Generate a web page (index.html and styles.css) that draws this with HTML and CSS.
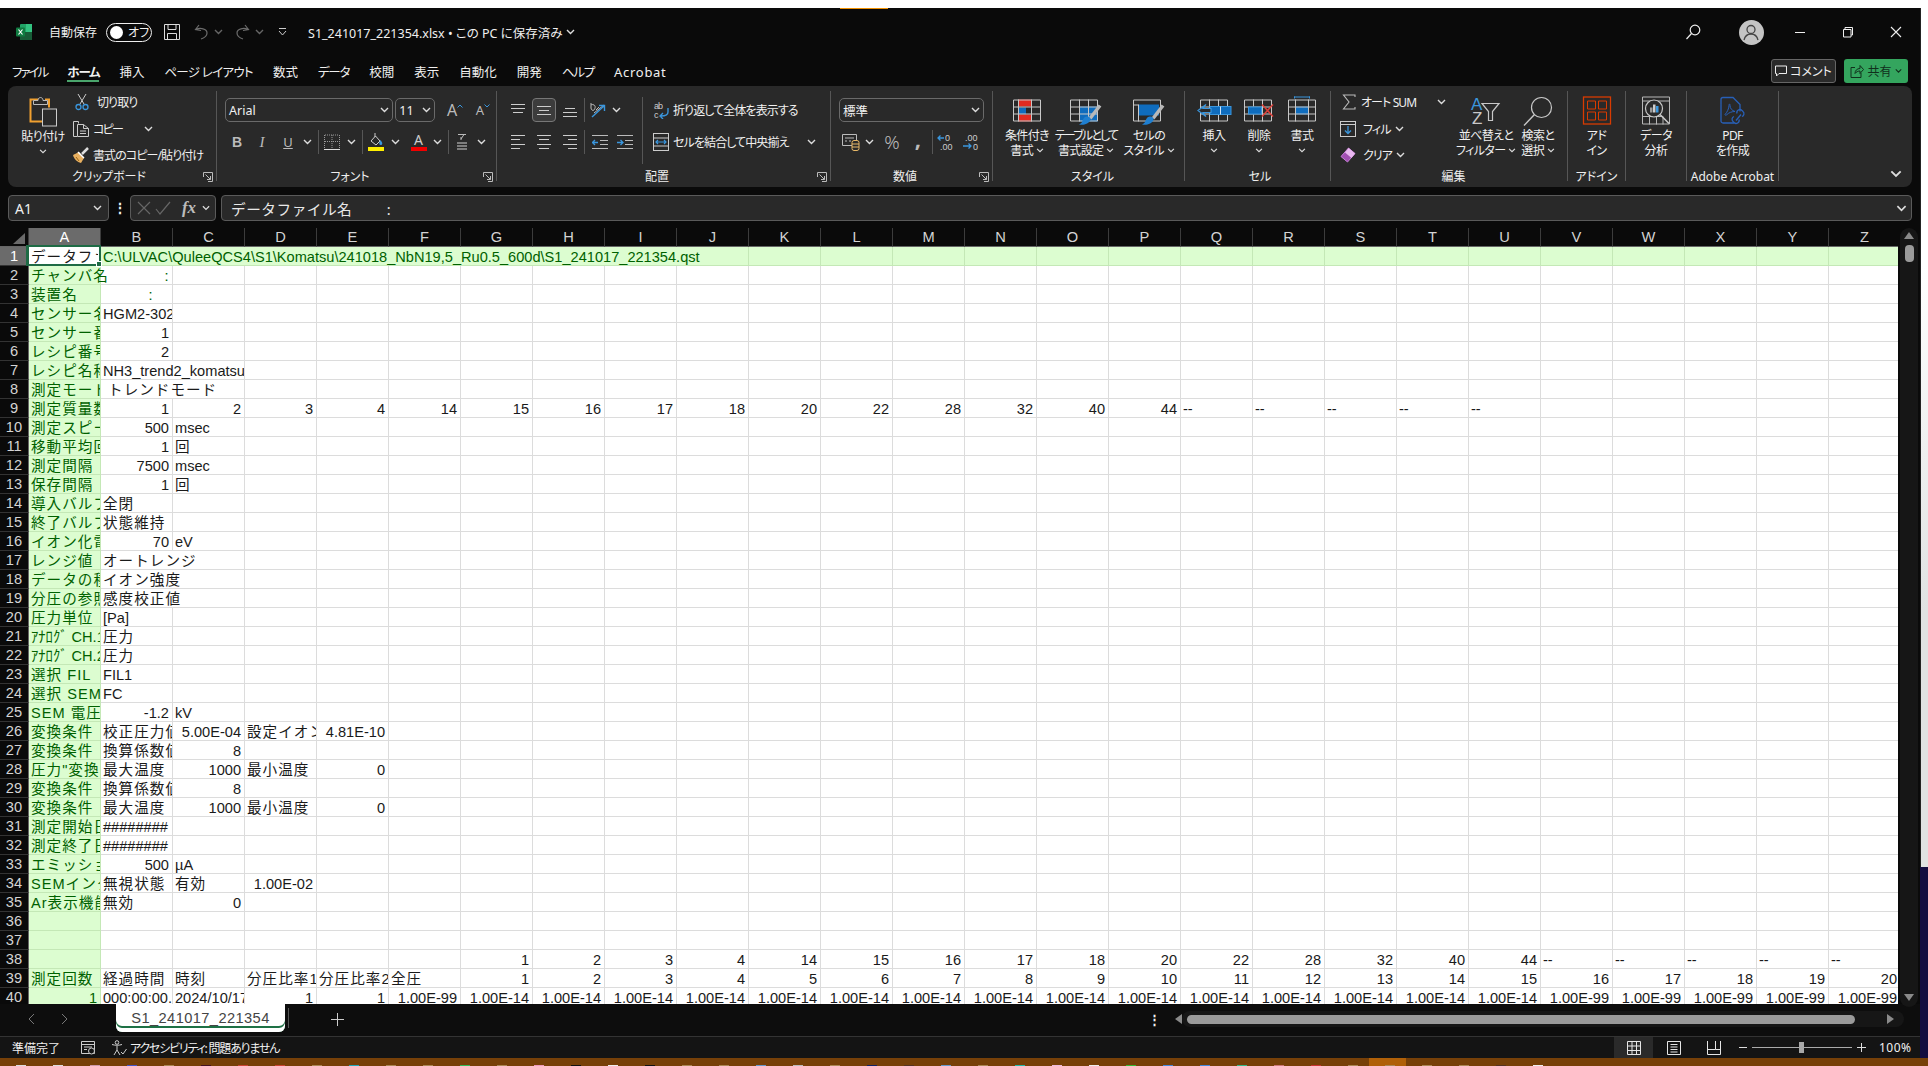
FILE: index.html
```html
<!DOCTYPE html>
<html lang="ja">
<head>
    <meta charset="UTF-8">
    <title>S1_241017_221354.xlsx - Excel</title>
    <link rel="stylesheet" href="styles.css">
</head>
<body>
    <svg class="sprite" aria-hidden="true">
        <symbol id="chev" viewBox="0 0 9 6"><path d="M1 1l3.500 3.500L8 1" fill="none" stroke="currentColor" stroke-width="1.400"/></symbol>
        <symbol id="launch" viewBox="0 0 10 10"><path d="M.5 5V.5h9v9H5M2.500 2.500l5 5M7.500 4v3.500H4" fill="none" stroke="currentColor"/></symbol>
        <symbol id="a-top" viewBox="0 0 14 14"><path d="M0 1.500h14M0 5.500h14M2 9.500h10" stroke="currentColor" fill="none"/></symbol>
        <symbol id="a-mid" viewBox="0 0 14 14"><path d="M0 3.500h14M2 7.500h10M0 11.500h14" stroke="currentColor" fill="none"/></symbol>
        <symbol id="a-bot" viewBox="0 0 14 14"><path d="M2 5.500h10M0 9.500h14M0 13.500h14" stroke="currentColor" fill="none"/></symbol>
        <symbol id="a-left" viewBox="0 0 14 16"><path d="M0 1.500h14M0 5.500h9M0 10.500h14M0 14.500h9" stroke="currentColor" fill="none"/></symbol>
        <symbol id="a-center" viewBox="0 0 14 16"><path d="M0 1.500h14M2 5.500h10M0 10.500h14M2 14.500h10" stroke="currentColor" fill="none"/></symbol>
        <symbol id="a-right" viewBox="0 0 14 16"><path d="M0 1.500h14M5 5.500h9M0 10.500h14M5 14.500h9" stroke="currentColor" fill="none"/></symbol>
        <symbol id="brush" viewBox="0 0 32 30"><path d="M30 9L20 22" stroke="#b8b8b8" stroke-width="3.500" fill="none"/><path d="M17 20c3 0 4 2 3.500 3.500C19 27 14 29 9 28c3-1 3-3 4-5s2-3 4-3z" fill="#1f7fd0"/></symbol>
    </svg>

    <div class="top-strip"><span class="top-mark"></span></div>

    <div class="middle">
        <div class="window">
            <header class="titlebar">
                <svg class="xl-logo" viewBox="0 0 16 16" width="16" height="16">
                    <rect x="4" y="0" width="12" height="16" rx="1" fill="#21a366"/>
                    <rect x="10" y="0" width="6" height="8" fill="#33c481"/>
                    <rect x="4" y="8" width="12" height="8" fill="#185c37"/>
                    <rect x="0" y="3.500" width="9" height="9" rx="1" fill="#107c41"/>
                    <path d="M2.500 5.500l4 5M6.500 5.500l-4 5" stroke="#fff" stroke-width="1.200"/>
                </svg>
                <span class="autosave">自動保存</span>
                <span class="toggle"><i class="toggle-dot"></i>オフ</span>
                <svg class="save" viewBox="0 0 16 16" width="16" height="16"><path d="M.5.500h15v15H.5zM4 .5v5h8v-5M3.500 15.500v-6h9v6" fill="none" stroke="#ddd"/></svg>
                <svg class="undo" viewBox="0 0 15 16" width="15" height="16"><path d="M5 1L1.500 5.500 7 6.500M2 5.500c4-2 11-1 11 3.500 0 3-3 5-6 6" fill="none" stroke="#6c6c6c" stroke-width="1.200"/></svg>
                <svg class="chev dim"><use href="#chev"/></svg>
                <svg class="redo" viewBox="0 0 15 16" width="15" height="16"><path d="M10 1l3.500 4.500L8 6.500M13 5.500C9 3.500 2 4.500 2 9c0 3 3 5 6 6" fill="none" stroke="#6c6c6c" stroke-width="1.200"/></svg>
                <svg class="chev dim"><use href="#chev"/></svg>
                <svg class="qat" viewBox="0 0 9 8" width="9" height="8"><path d="M1 .5h7M1 3l3.500 4L8 3" fill="none" stroke="#ccc"/></svg>
                <span class="doc-title">S1_241017_221354.xlsx • この PC に保存済み</span>
                <svg class="chev title-chev"><use href="#chev"/></svg>
                <span class="title-right">
                    <svg class="search" viewBox="0 0 16 16" width="16" height="16"><circle cx="10" cy="6" r="4.800" fill="none" stroke="#eee" stroke-width="1.200"/><path d="M6.500 9.500L1.500 15" stroke="#eee" stroke-width="1.200"/></svg>
                    <span class="avatar"><svg viewBox="0 0 24 24" width="24" height="24"><circle cx="12" cy="9.500" r="4" fill="none" stroke="#444" stroke-width="1.300"/><path d="M5 20c1-4 3.500-6 7-6s6 2 7 6" fill="none" stroke="#444" stroke-width="1.300"/></svg></span>
                    <svg class="winbtn" viewBox="0 0 12 12" width="12" height="12"><path d="M1 6.500h10" stroke="#eee"/></svg>
                    <svg class="winbtn" viewBox="0 0 12 12" width="12" height="12"><path d="M3 3V1.500h7.500V9H9M1.500 3.500H9V11H1.500z" fill="none" stroke="#eee"/></svg>
                    <svg class="winbtn" viewBox="0 0 12 12" width="12" height="12"><path d="M1 1l10 10M11 1L1 11" stroke="#eee" stroke-width="1.100"/></svg>
                </span>
            </header>

            <nav class="tabs">
                <span class="tab kana-tight">ファイル</span>
                <span class="tab tab-on kana">ホーム</span>
                <span class="tab">挿入</span>
                <span class="tab kana-loose">ページ レイアウト</span>
                <span class="tab">数式</span>
                <span class="tab kana">データ</span>
                <span class="tab">校閲</span>
                <span class="tab">表示</span>
                <span class="tab">自動化</span>
                <span class="tab">開発</span>
                <span class="tab kana">ヘルプ</span>
                <span class="tab tab-latin">Acrobat</span>
                <span class="tab-actions">
                    <span class="btn-comment">
                        <svg viewBox="0 0 12 12" width="12" height="12"><path d="M.5 1h11v7.500H4L1.500 11V8.500h-1z" fill="none" stroke="#eee"/></svg>
                        コメント
                    </span>
                    <span class="btn-share">
                        <svg viewBox="0 0 14 14" width="14" height="14"><path d="M5 3.500H1v10h10V9M5 9.500c0-3 2-5 5-5V1.500l3.500 4-3.500 4V7c-2 0-4 1-5 2.500z" fill="none" stroke="#10301c"/></svg>
                        共有
                        <svg class="chev"><use href="#chev"/></svg>
                    </span>
                </span>
            </nav>

            <section class="ribbon">
                <!-- クリップボード -->
                <div class="group g-clip">
                    <div class="group-body">
                        <div class="big w56">
                            <svg class="big-icon" viewBox="0 0 28 30" width="28" height="30">
                                <path d="M12 3H1.500v22H13" fill="none" stroke="#f0a030" stroke-width="2"/>
                                <path d="M16 3h4v8" fill="none" stroke="#f0a030" stroke-width="2"/>
                                <path d="M4.500 8V4h4.500c0-4 5-4 5 0h4.500v4z" fill="#2a2a2a" stroke="#bbb"/>
                                <rect x="13.500" y="12.500" width="14" height="17" fill="#2a2a2a" stroke="#ccc"/>
                            </svg>
                            <span class="big-text paste-text">貼り付け<br><svg class="chev"><use href="#chev"/></svg></span>
                        </div>
                        <div class="stack">
                            <div class="stack-row">
                                <svg class="stack-icon" viewBox="0 0 14 17" width="14" height="17"><path d="M3 0l6 10M11 0L5 10" stroke="#ccc" fill="none"/><circle cx="3.500" cy="13" r="2.500" fill="none" stroke="#3a96dd" stroke-width="1.300"/><circle cx="10.500" cy="13" r="2.500" fill="none" stroke="#3a96dd" stroke-width="1.300"/></svg>
                                切り取り
                            </div>
                            <div class="stack-row">
                                <svg class="stack-icon" viewBox="0 0 16 16" width="16" height="16"><path d="M4 15.500H.5V.5h5v2" fill="none" stroke="#ccc"/><path d="M4.500 3.500h6l5 4v8h-11zM10.500 3.500v4h5M7 10h6M7 12.500h6" fill="none" stroke="#ccc"/></svg>
                                <span class="tight">コピー</span>
                                <svg class="chev copy-chev"><use href="#chev"/></svg>
                            </div>
                            <div class="stack-row">
                                <svg class="stack-icon" viewBox="0 0 16 16" width="16" height="16"><path d="M0 8l6-3 5 6-3 5C4 15 1 12 0 8z" fill="#e8b060"/><path d="M5 5l6 6" stroke="#fff" stroke-width="1.500"/><path d="M9 7l6-6" stroke="#ddd" stroke-width="2.500"/><path d="M3 10l3 4" stroke="#996515"/></svg>
                                書式のコピー/貼り付け
                            </div>
                        </div>
                    </div>
                    <div class="group-label"><span>クリップボード</span><svg class="launch"><use href="#launch"/></svg></div>
                </div>

                <!-- フォント -->
                <div class="group g-font">
                    <div class="group-body rows">
                        <div class="row">
                            <span class="combo w170">Arial<svg class="chev"><use href="#chev"/></svg></span>
                            <span class="combo w40 ml2">11<svg class="chev"><use href="#chev"/></svg></span>
                            <span class="tb w26 ml7 font-size-btn">A<svg viewBox="0 0 6 4" width="6" height="4"><path d="M.5 3.500L3 1l2.500 2.500" fill="none" stroke="#3a96dd"/></svg></span>
                            <span class="tb w26 ml2 font-size-btn small">A<svg viewBox="0 0 6 4" width="6" height="4"><path d="M.5.500L3 3 5.500.5" fill="none" stroke="#3a96dd"/></svg></span>
                        </div>
                        <div class="row row2">
                            <span class="tb w24 t-b">B</span>
                            <span class="tb w26 t-i">I</span>
                            <span class="tb w26 t-u">U</span>
                            <span class="tb w12"><svg class="chev"><use href="#chev"/></svg></span>
                            <i class="sep ml5"></i>
                            <span class="tb w26"><svg viewBox="0 0 16 16" width="16" height="16"><path d="M.5 1v13M15.500 1v13M8 1v13M1 1h14M1 7.500h14" fill="none" stroke="#999" stroke-dasharray="1 1"/><path d="M0 15.500h16" stroke="#ddd"/></svg></span>
                            <span class="tb w12"><svg class="chev"><use href="#chev"/></svg></span>
                            <i class="sep ml5"></i>
                            <span class="tb w26"><svg viewBox="0 0 16 18" width="16" height="18"><path d="M3 8l4.500-5 4.500 5-4 4z" fill="none" stroke="#ccc"/><path d="M7 0v4" stroke="#ccc"/><path d="M12.500 7c1 1.500 1.800 2.500 1.800 3.500a1.500 1.500 0 0 1-3 0c0-1 .5-2 1.200-3.500z" fill="#3a96dd"/><rect y="14" width="16" height="4" fill="#ffef00"/></svg></span>
                            <span class="tb w12"><svg class="chev"><use href="#chev"/></svg></span>
                            <span class="tb w30 font-color"><span class="fc-a">A</span></span>
                            <span class="tb w12"><svg class="chev"><use href="#chev"/></svg></span>
                            <i class="sep ml5"></i>
                            <span class="tb w26"><svg viewBox="0 0 12 18" width="12" height="18"><path d="M2 1.500h8M8 1.500L5 6M5 4v3" fill="none" stroke="#bbb"/><path d="M1 10h10M1 13h10M1 16h10" stroke="#999" stroke-width="1.500"/></svg></span>
                            <span class="tb w12"><svg class="chev"><use href="#chev"/></svg></span>
                        </div>
                    </div>
                    <div class="group-label"><span>フォント</span><svg class="launch"><use href="#launch"/></svg></div>
                </div>

                <!-- 配置 -->
                <div class="group g-align">
                    <div class="group-body">
                        <div class="align-left rows">
                            <div class="row">
                                <span class="tb w20"><svg class="al"><use href="#a-top"/></svg></span>
                                <span class="tb w24 ml4 tb-on"><svg class="al"><use href="#a-mid"/></svg></span>
                                <span class="tb w28"><svg class="al"><use href="#a-bot"/></svg></span>
                                <i class="sep"></i>
                                <span class="tb w24"><svg viewBox="0 0 17 16" width="17" height="16"><path d="M2 1v5c0 2 2 3 3 2s2-4 0-5-3 0-3 0M7 8l3-3M5 11l10-8" fill="none" stroke="#bbb"/><path d="M3 15L15 4M10 3.500h5.500V9" fill="none" stroke="#3a96dd" stroke-width="1.400"/></svg></span>
                                <span class="tb w14"><svg class="chev"><use href="#chev"/></svg></span>
                            </div>
                            <div class="row row2">
                                <span class="tb w20"><svg class="al2"><use href="#a-left"/></svg></span>
                                <span class="tb w24 ml4"><svg class="al2"><use href="#a-center"/></svg></span>
                                <span class="tb w28"><svg class="al2"><use href="#a-right"/></svg></span>
                                <i class="sep"></i>
                                <span class="tb w30"><svg viewBox="0 0 16 16" width="16" height="16"><path d="M0 1.500h16M8 6.500h8M8 10.500h8M0 14.500h16" stroke="#bbb"/><path d="M6 8.500H.5M3 6L.5 8.500 3 11" fill="none" stroke="#3a96dd" stroke-width="1.300"/></svg></span>
                                <span class="tb w20"><svg viewBox="0 0 16 16" width="16" height="16"><path d="M0 1.500h16M8 6.500h8M8 10.500h8M0 14.500h16" stroke="#bbb"/><path d="M0 8.500h6M3.500 6L6 8.500 3.500 11" fill="none" stroke="#3a96dd" stroke-width="1.300"/></svg></span>
                            </div>
                        </div>
                        <div class="align-right rows">
                            <div class="row">
                                <svg class="row-icon" viewBox="0 0 17 18" width="17" height="18"><text x="1" y="8" class="svg-small">ab</text><text x="1" y="17" class="svg-small">c</text><path d="M15 7v4c0 3-2 4-7 4M10 12l-3 3 3 3" fill="none" stroke="#3a96dd" stroke-width="1.400"/></svg>
                                折り返して全体を表示する
                            </div>
                            <div class="row row2">
                                <svg class="row-icon" viewBox="0 0 17 18" width="17" height="18"><rect x=".5" y=".5" width="15" height="17" fill="none" stroke="#ccc"/><path d="M0 5h16M0 13h16" stroke="#ccc"/><path d="M3 9h10M5 7L3 9l2 2M11 7l2 2-2 2" fill="none" stroke="#3a96dd" stroke-width="1.200"/></svg>
                                セルを結合して中央揃え
                                <svg class="chev merge-chev"><use href="#chev"/></svg>
                            </div>
                        </div>
                    </div>
                    <div class="group-label"><span>配置</span><svg class="launch"><use href="#launch"/></svg></div>
                </div>

                <!-- 数値 -->
                <div class="group g-num">
                    <div class="group-body rows">
                        <div class="row"><span class="combo w145">標準<svg class="chev"><use href="#chev"/></svg></span></div>
                        <div class="row row2">
                            <span class="tb w24"><svg viewBox="0 0 18 18" width="18" height="18"><path d="M.5 1.500h14v11H.5zM3 5h9M3 8h2M7 8h2" fill="none" stroke="#bbb"/><rect x="10" y="7.500" width="7" height="10" rx="2" fill="#2a2a2a" stroke="#e8b868"/><path d="M10 11h7M10 14h7" stroke="#e8b868"/></svg></span>
                            <span class="tb w12"><svg class="chev"><use href="#chev"/></svg></span>
                            <span class="tb w32 ml1 t-pct">%</span>
                            <span class="tb w20 t-comma">,</span>
                            <i class="sep ml4"></i>
                            <span class="tb w24"><svg viewBox="0 0 17 18" width="17" height="18"><text x="8" y="8" class="svg-small">0</text><text x="3" y="17" class="svg-small">.00</text><path d="M7 5H1M3.500 2.500L1 5l2.500 2.500" fill="none" stroke="#3a96dd" stroke-width="1.300"/></svg></span>
                            <span class="tb w26"><svg viewBox="0 0 17 18" width="17" height="18"><text x="3" y="8" class="svg-small">.00</text><text x="11" y="17" class="svg-small">0</text><path d="M1 13h8M6.500 10.500L9 13l-2.500 2.500" fill="none" stroke="#3a96dd" stroke-width="1.300"/></svg></span>
                        </div>
                    </div>
                    <div class="group-label"><span>数値</span><svg class="launch"><use href="#launch"/></svg></div>
                </div>

                <!-- スタイル -->
                <div class="group g-style">
                    <div class="group-body">
                        <div class="big w52">
                            <svg class="big-icon" viewBox="0 0 28 30" width="28" height="30">
                                <rect x="5" y="3" width="13" height="7" fill="#e02b20"/><rect x="5" y="11" width="8" height="7" fill="#0f6cbd"/><rect x="5" y="18" width="14" height="7" fill="#e02b20"/>
                                <path d="M.5 3.500h27v21H.5zM.5 10.500h27M.5 17.500h27M5.500 3v22M18.500 3v22" fill="none" stroke="#c8c8c8"/>
                            </svg>
                            <span class="big-text">条件付き<br>書式 <svg class="chev"><use href="#chev"/></svg></span>
                        </div>
                        <div class="big w66">
                            <svg class="big-icon" viewBox="0 0 32 30" width="32" height="30">
                                <rect x="9" y="10" width="19" height="15" fill="#0f6cbd"/>
                                <path d="M.5 3.500h27v21H.5zM.5 10.500h27M.5 17.500h27M9.500 3v22M18.500 3v22" fill="none" stroke="#c8c8c8"/>
                                <use href="#brush" width="32" height="30"/>
                            </svg>
                            <span class="big-text"><span class="tight">テーブルとして</span><br>書式設定 <svg class="chev"><use href="#chev"/></svg></span>
                        </div>
                        <div class="big w60">
                            <svg class="big-icon" viewBox="0 0 32 30" width="32" height="30">
                                <rect x="6" y="8" width="20" height="11" fill="#0f6cbd"/>
                                <path d="M.5 3.500h27v21H.5zM.5 8.500h5M5.500 8v17" fill="none" stroke="#c8c8c8"/>
                                <use href="#brush" width="32" height="30"/>
                            </svg>
                            <span class="big-text">セルの<br>スタイル <svg class="chev"><use href="#chev"/></svg></span>
                        </div>
                    </div>
                    <div class="group-label plain"><span>スタイル</span></div>
                </div>

                <!-- セル -->
                <div class="group g-cells">
                    <div class="group-body">
                        <div class="big w48">
                            <svg class="big-icon" viewBox="0 0 34 30" width="34" height="30">
                                <path d="M3.500 3.500h27v21h-27zM3.500 10.500h27M3.500 17.500h27M12.500 3v22M21.500 3v22" fill="none" stroke="#c8c8c8"/>
                                <rect x="13" y="10" width="21" height="8" fill="#0f6cbd" stroke="#3a96dd"/>
                                <path d="M14 12H6l3-4-8 6 8 6-3-4h8z" fill="#2a2a2a" stroke="#3a96dd" stroke-width="1.200"/>
                                <path d="M23.500 10v8" stroke="#cfe4f7"/>
                            </svg>
                            <span class="big-text">挿入<br><svg class="chev"><use href="#chev"/></svg></span>
                        </div>
                        <div class="big w42">
                            <svg class="big-icon" viewBox="0 0 30 30" width="30" height="30">
                                <path d="M.5 3.500h27v21H.5zM.5 10.500h27M.5 17.500h27M9.500 3v7M9.500 18v7M18.500 3v22" fill="none" stroke="#c8c8c8"/>
                                <rect x="4.500" y="10.500" width="13" height="7" fill="#0f6cbd" stroke="#3a96dd"/>
                                <path d="M18 8l11 12M29 8L18 20" stroke="#e0403a" stroke-width="1.400"/>
                            </svg>
                            <span class="big-text">削除<br><svg class="chev"><use href="#chev"/></svg></span>
                        </div>
                        <div class="big w44">
                            <svg class="big-icon" viewBox="0 0 28 30" width="28" height="30">
                                <path d="M6 .5h16M6.500 0v2M21.500 0v2" stroke="#3a96dd" fill="none"/>
                                <rect x="7" y="10" width="14" height="8" fill="#0f6cbd"/>
                                <path d="M.5 3.500h27v21H.5zM.5 10.500h27M.5 17.500h27M7.500 3v22M20.500 3v22" fill="none" stroke="#c8c8c8"/>
                            </svg>
                            <span class="big-text">書式<br><svg class="chev"><use href="#chev"/></svg></span>
                        </div>
                    </div>
                    <div class="group-label plain"><span>セル</span></div>
                </div>

                <!-- 編集 -->
                <div class="group g-edit">
                    <div class="group-body">
                        <div class="stack w118">
                            <div class="stack-row">
                                <svg class="edit-icon sigma" viewBox="0 0 14 16" width="14" height="16"><path d="M13 3V1H1.500L7 8l-5.500 7H13v-2" fill="none" stroke="#bbb" stroke-width="1.100"/></svg>
                                オート SUM
                                <svg class="chev sum-chev"><use href="#chev"/></svg>
                            </div>
                            <div class="stack-row">
                                <svg class="edit-icon" viewBox="0 0 16 16" width="16" height="16"><rect x=".5" y=".5" width="15" height="15" fill="none" stroke="#ccc"/><path d="M0 3.500h16" stroke="#ccc"/><path d="M8 5v7.500M5 9.500l3 3 3-3" fill="none" stroke="#3a96dd" stroke-width="1.300"/></svg>
                                フィル
                                <svg class="chev"><use href="#chev"/></svg>
                            </div>
                            <div class="stack-row">
                                <svg class="edit-icon" viewBox="0 0 16 16" width="16" height="16"><path d="M8.500 1L15 6.500 7.500 15 1 9.500z" fill="#a24fb3" stroke="#c77fd6"/><path d="M5 5.500L11.500 11l3.500-4.500L8.500 1z" fill="#e9b8f0"/></svg>
                                クリア
                                <svg class="chev"><use href="#chev"/></svg>
                            </div>
                        </div>
                        <div class="big w56">
                            <svg class="big-icon" viewBox="0 0 30 30" width="30" height="30">
                                <text x="0" y="13" class="svg-big blue">A</text>
                                <text x="1" y="27" class="svg-big">Z</text>
                                <path d="M11 7h17l-6.500 8v9h-4v-9z" fill="none" stroke="#c8c8c8" stroke-width="1.200"/>
                            </svg>
                            <span class="big-text">並べ替えと<br>フィルター <svg class="chev"><use href="#chev"/></svg></span>
                        </div>
                        <div class="big w48">
                            <svg class="big-icon" viewBox="0 0 30 30" width="30" height="30">
                                <circle cx="18.500" cy="11" r="10" fill="none" stroke="#c8c8c8" stroke-width="1.200"/>
                                <path d="M11.500 18L1 29" stroke="#c8c8c8" stroke-width="1.400"/>
                            </svg>
                            <span class="big-text">検索と<br>選択 <svg class="chev"><use href="#chev"/></svg></span>
                        </div>
                    </div>
                    <div class="group-label plain"><span>編集</span></div>
                </div>

                <!-- アドイン -->
                <div class="group g-addin">
                    <div class="group-body">
                        <div class="big full">
                            <svg class="big-icon" viewBox="0 0 28 30" width="28" height="30">
                                <rect x=".5" y=".5" width="27" height="27" fill="none" stroke="#d83b01" stroke-width="1.300"/>
                                <path d="M4.500 4.500h8v8h-8zM15.500 4.500h8v8h-8zM4.500 15.500h8v8h-8zM15.500 15.500h8v8h-8z" fill="none" stroke="#d83b01"/>
                            </svg>
                            <span class="big-text">アド<br>イン</span>
                        </div>
                    </div>
                    <div class="group-label plain"><span>アドイン</span></div>
                </div>

                <!-- データ分析 -->
                <div class="group g-data">
                    <div class="group-body">
                        <div class="big full">
                            <svg class="big-icon" viewBox="0 0 28 30" width="28" height="30">
                                <path d="M.5.500h27v27H.5zM.5 4.500h27M.5 20h20M7.500 20v8M14.500 20v8M21 20v8" fill="none" stroke="#b8b8b8"/>
                                <circle cx="12" cy="12" r="8.500" fill="#2a2a2a" stroke="#c8c8c8" stroke-width="1.200"/>
                                <rect x="8" y="11" width="2.500" height="5" fill="#999"/><rect x="11" y="8" width="2.500" height="8" fill="#ccc"/><rect x="14" y="9.500" width="2.500" height="6.500" fill="#3a96dd"/>
                                <path d="M18 18l9 9" stroke="#c8c8c8" stroke-width="1.600"/>
                            </svg>
                            <span class="big-text">データ<br>分析</span>
                        </div>
                    </div>
                    <div class="group-label plain"><span></span></div>
                </div>

                <!-- Adobe Acrobat -->
                <div class="group g-pdf">
                    <div class="group-body">
                        <div class="big full">
                            <svg class="big-icon" viewBox="0 0 26 30" width="26" height="30">
                                <path d="M14 26.500H3a2 2 0 0 1-2-2V3a2 2 0 0 1 2-2h10l7 7v7" fill="none" stroke="#2860b8" stroke-width="1.300"/>
                                <path d="M5 18c2-2 4-6 4-9 0-2 1-2 1 0 0 3 2 5 5 6-3 0-6 1-8 3-1 1-2 1-2 0z" fill="none" stroke="#2860b8"/>
                                <path d="M17 17a3 3 0 0 1 5-3l1 1a3 3 0 0 1-1 5M19 23a3 3 0 0 1-5 3l-1-1a3 3 0 0 1 1-5M16 24l5-6" fill="none" stroke="#2860b8" stroke-width="1.300"/>
                            </svg>
                            <span class="big-text">PDF<br>を作成</span>
                        </div>
                    </div>
                    <div class="group-label plain"><span>Adobe Acrobat</span></div>
                </div>

                <svg class="chev ribbon-more"><use href="#chev"/></svg>
            </section>

            <div class="formula">
                <span class="name-box">A1<svg class="chev"><use href="#chev"/></svg></span>
                <span class="formula-dots">⋮</span>
                <span class="fx-box">
                    <svg viewBox="0 0 14 14" width="14" height="14"><path d="M1 1l12 12M13 1L1 13" stroke="#666" stroke-width="1.200"/></svg>
                    <svg viewBox="0 0 16 14" width="16" height="14"><path d="M1 8l4 5L15 1" fill="none" stroke="#666" stroke-width="1.200"/></svg>
                    <i class="fx">fx</i>
                    <svg class="chev"><use href="#chev"/></svg>
                </span>
                <span class="formula-input">データファイル名&nbsp;&nbsp;&nbsp;&nbsp;&nbsp;&nbsp;&nbsp;&nbsp;:<svg class="chev"><use href="#chev"/></svg></span>
            </div>

            <div class="sheet-area">
                <div class="grid-view"><table class="grid" id="grid"></table></div>
                <div class="vscroll">
                    <svg viewBox="0 0 10 7" width="10" height="7"><path d="M5 0l5 7H0z" fill="#8a8a8a"/></svg>
                    <span class="vthumb"></span>
                    <svg class="vdown" viewBox="0 0 10 7" width="10" height="7"><path d="M0 0h10L5 7z" fill="#8a8a8a"/></svg>
                </div>
            </div>

            <div class="sheet-tabs">
                <span class="nav-arrows">
                    <svg viewBox="0 0 7 12" width="7" height="12"><path d="M6 1L1 6l5 5" fill="none" stroke="#777"/></svg>
                    <svg viewBox="0 0 7 12" width="7" height="12"><path d="M1 1l5 5-5 5" fill="none" stroke="#777"/></svg>
                </span>
                <span class="sheet-tab">S1_241017_221354</span>
                <i class="tab-sep"></i>
                <svg class="add-sheet" viewBox="0 0 13 13" width="13" height="13"><path d="M6.500 0v13M0 6.500h13" stroke="#ccc"/></svg>
                <span class="tabs-dots">⋮</span>
                <svg class="hleft" viewBox="0 0 7 10" width="7" height="10"><path d="M7 0v10L0 5z" fill="#8a8a8a"/></svg>
                <span class="hscroll">
                    <span class="hthumb"></span>
                    <svg viewBox="0 0 7 10" width="7" height="10"><path d="M0 0v10l7-5z" fill="#8a8a8a"/></svg>
                </span>
            </div>

            <footer class="status">
                <span class="ready">準備完了</span>
                <svg class="macro" viewBox="0 0 15 14" width="15" height="14"><path d="M.5.500h13v12H.5zM.5 3.500h13M3 6h8M3 8.500h3" fill="none" stroke="#ccc"/><circle cx="10.500" cy="10" r="3" fill="#141414" stroke="#ccc"/></svg>
                <svg class="a11y" viewBox="0 0 15 16" width="15" height="16"><circle cx="5" cy="2.500" r="1.800" fill="none" stroke="#ccc"/><path d="M0 4.500c3 1 7 1 10 0M5 6v4l-3 5M5 10l3 5" fill="none" stroke="#ccc"/><path d="M9 12l2 2 3.500-5" fill="none" stroke="#ccc"/></svg>
                <span class="a11y-text">アクセシビリティ: 問題ありません</span>
                <span class="status-right">
                    <span class="view view-on"><svg viewBox="0 0 14 14" width="14" height="14"><path d="M.5.500h13v13H.5zM.5 5h13M.5 9.500h13M5 .5v13M9.500.5v13" fill="none" stroke="#e6e6e6"/></svg></span>
                    <span class="view"><svg viewBox="0 0 14 14" width="14" height="14"><path d="M.5.500h13v13H.5zM3.500 3.500h7M3.500 6h7M3.500 8.500h7M3.500 11h7" fill="none" stroke="#e6e6e6"/></svg></span>
                    <span class="view"><svg viewBox="0 0 14 14" width="14" height="14"><path d="M.5 0v13.500h13V0M.5 8.500h8V0M8.500 8.500h5" fill="none" stroke="#e6e6e6"/></svg></span>
                    <span class="zoom-minus"></span>
                    <span class="slider"><i class="slider-thumb"></i></span>
                    <svg class="zoom-plus" viewBox="0 0 9 9" width="9" height="9"><path d="M4.500 0v9M0 4.500h9" stroke="#ddd"/></svg>
                    <span class="zoom-pct">100%</span>
                </span>
            </footer>
        </div>
        <div class="desk"><div class="desk-light"></div></div>
    </div>

    <div class="taskbar" id="taskbar"></div>

    <script src="grid.js"></script>
</body>
</html>
```

FILE: styles.css
```css
* {
    box-sizing: border-box;
}

html, body {
    margin: 0;
    padding: 0;
    width: 1928px;
    height: 1066px;
    overflow: hidden;
}

body {
    font-family: "Noto Sans", "Noto Sans CJK JP", sans-serif;
    font-feature-settings: "palt";
    font-size: 12px;
    color: #f0f0f0;
    background: #fff;
}

.sprite {
    position: absolute;
    width: 0;
    height: 0;
}

svg {
    flex: none;
    display: block;
}

.chev {
    width: 9px;
    height: 6px;
    color: #ddd;
}

.chev.dim {
    color: #666;
}

/* screen edges */
.top-strip {
    height: 8px;
    position: relative;
}

.top-mark {
    position: absolute;
    left: 840px;
    top: 8px;
    width: 48px;
    height: 1px;
    background: #f09000;
    z-index: 2;
}

.middle {
    display: flex;
    height: 1050px;
}

.window {
    width: 1920px;
    height: 1050px;
    background: #0a0a0a;
    display: flex;
    flex-direction: column;
}

.desk {
    width: 8px;
    background: #140c40;
}

.desk-light {
    height: 859px;
    border-left: 1px solid #222;
    background: linear-gradient(#fff, #fff 30%, #e0e2e2 70%);
}

.taskbar {
    height: 8px;
    display: flex;
    align-items: flex-end;
    gap: 27px;
    padding-left: 16px;
    background: linear-gradient(90deg, #774008 1369px, #b06008 1369px, #b06008 1406px, #774008 1406px);
}

.taskbar i {
    width: 10px;
    height: 1px;
}

/* title bar */
.titlebar {
    height: 48px;
    display: flex;
    align-items: center;
    flex: none;
}

.xl-logo {
    margin-left: 16px;
}

.autosave {
    margin-left: 17px;
    font-size: 12px;
}

.toggle {
    margin-left: 9px;
    width: 46px;
    height: 19px;
    border: 1px solid #eee;
    border-radius: 10px;
    display: flex;
    align-items: center;
    gap: 5px;
    padding-left: 3px;
    font-size: 12px;
}

.toggle-dot {
    width: 13px;
    height: 13px;
    border-radius: 50%;
    background: #fff;
}

.save {
    margin-left: 12px;
}

.undo {
    margin-left: 14px;
}

.undo + .chev {
    margin-left: 5px;
}

.redo {
    margin-left: 12px;
}

.redo + .chev {
    margin-left: 5px;
}

.qat {
    margin-left: 14px;
}

.doc-title {
    margin-left: 21px;
    font-size: 12.5px;
    white-space: nowrap;
}

.title-chev {
    margin-left: 3px;
}

.title-right {
    margin-left: auto;
    display: flex;
    align-items: center;
}

.search {
    margin-right: 38px;
}

.avatar {
    width: 25px;
    height: 25px;
    border-radius: 50%;
    background: #c4c4c4;
    margin-right: 30px;
}

.winbtn {
    margin-right: 36px;
}

.winbtn:last-child {
    margin-right: 18px;
}

/* ribbon tabs */
.tabs {
    height: 30px;
    flex: none;
    display: flex;
    align-items: flex-start;
    gap: 20px;
    padding-left: 12px;
}

.tab {
    height: 26px;
    padding-top: 8px;
    line-height: 18px;
    font-size: 12.5px;
    white-space: nowrap;
    position: relative;
}

.kana {
    letter-spacing: -1.2px;
}

.kana-tight {
    letter-spacing: -2px;
}

.kana-loose {
    letter-spacing: -.7px;
}

.tab-latin {
    padding-top: 7px;
    font-size: 13px;
    letter-spacing: .7px;
}

.tab-on {
    font-weight: 700;
    border-bottom: 2px solid #4aa56c;
}

.tab-actions {
    margin-left: auto;
    display: flex;
    gap: 8px;
    margin-right: 12px;
    padding-top: 3px;
}

.btn-comment, .btn-share {
    height: 24px;
    width: 65px;
    display: flex;
    align-items: center;
    justify-content: center;
    gap: 3px;
    border-radius: 3px;
    white-space: nowrap;
}

.btn-comment {
    border: 1px solid #666;
    background: #2a2a2a;
}

.btn-share {
    width: 64px;
    background: #34a55e;
    color: #10301c;
}

.btn-share .chev {
    color: #10301c;
    width: 7px;
}

/* ribbon */
.ribbon {
    height: 101px;
    flex: none;
    margin: 0 8px;
    background: #292929;
    border-radius: 8px;
    display: flex;
    padding: 5px 0 6px;
}

.group {
    display: flex;
    flex-direction: column;
    flex: none;
    height: 90px;
    border-right: 1px solid #565656;
}

.g-clip { width: 209px; padding-left: 7px; }
.g-font { width: 280px; }
.g-align { width: 334px; }
.g-num { width: 162px; }
.g-style { width: 192px; padding-left: 8px; }
.g-cells { width: 146px; padding-left: 5px; }
.g-edit { width: 237px; padding-left: 9px; }
.g-addin { width: 58px; }
.g-data { width: 61px; }
.g-pdf { width: 92px; }

.group-body {
    height: 78px;
    display: flex;
}

.group-label {
    height: 14px;
    margin-bottom: -2px;
    padding-top: 2px;
    display: flex;
    align-items: center;
    line-height: 14px;
    font-size: 12px;
    white-space: nowrap;
    color: #eee;
}

.group-label span {
    flex: 1;
    text-align: center;
}

.launch {
    width: 10px;
    height: 10px;
    margin-right: 3px;
    color: #bbb;
}

.rows {
    flex-direction: column;
    padding-top: 7px;
}

.g-font .rows, .g-num .rows {
    padding-left: 8px;
}

.row {
    height: 24px;
    display: flex;
    align-items: center;
    white-space: nowrap;
    letter-spacing: -.9px;
}

.row2 {
    margin-top: 8px;
}

.stack {
    margin-top: -2px;
    display: flex;
    flex-direction: column;
}

.stack-row {
    height: 26.5px;
    display: flex;
    align-items: center;
    white-space: nowrap;
    gap: 4px;
    letter-spacing: -.9px;
}

.stack-icon {
    margin-left: 2px;
}

.stack-row:first-child .stack-icon {
    margin-left: 4px;
    margin-right: 4px;
}

.tight {
    letter-spacing: -1.8px;
}

.copy-chev {
    margin-left: 18px;
}

.edit-icon {
    margin-left: 0;
    margin-right: 3px;
}

.edit-icon.sigma {
    margin-left: 2px;
    margin-right: 1px;
}

.sum-chev {
    margin-left: 17px;
}

.big {
    display: flex;
    flex-direction: column;
    align-items: center;
    padding-top: 4px;
}

.big-icon {
    height: 33px;
    overflow: visible;
}

.big-text {
    margin-top: 1px;
    line-height: 14.5px;
    text-align: center;
    white-space: nowrap;
    letter-spacing: -.6px;
}

.big-text .chev {
    display: inline-block;
    width: 8px;
    height: 5px;
    vertical-align: 2px;
}

.paste-text {
    margin-top: 2px;
}

.full { width: 100%; }
.w12 { width: 12px; }
.w14 { width: 14px; }
.w20 { width: 20px; }
.w24 { width: 24px; }
.w26 { width: 26px; }
.w28 { width: 28px; }
.w30 { width: 30px; }
.w32 { width: 32px; }
.w40 { width: 40px; }
.w42 { width: 42px; }
.w44 { width: 44px; }
.w48 { width: 48px; }
.w52 { width: 52px; }
.w56 { width: 56px; }
.w60 { width: 60px; }
.w66 { width: 66px; }
.w118 { width: 118px; }
.w145 { width: 145px; }
.w170 { width: 170px; }
.ml1 { margin-left: 1px; }
.ml2 { margin-left: 2px; }
.ml4 { margin-left: 4px; }
.ml5 { margin-left: 5px; }
.ml7 { margin-left: 7px; }

.combo {
    height: 24px;
    border: 1px solid #6a6a6a;
    border-radius: 5px;
    display: flex;
    align-items: center;
    justify-content: space-between;
    padding: 0 3px;
    font-size: 12.5px;
    letter-spacing: 0;
    background: #292929;
}

.tb {
    height: 24px;
    display: flex;
    align-items: center;
    justify-content: center;
    flex: none;
    color: #bbb;
    letter-spacing: 0;
}

.tb-on {
    background: #3c3c3c;
    border: 1px solid #777;
    border-radius: 4px;
}

.sep {
    width: 1px;
    height: 24px;
    background: #565656;
    flex: none;
}

.font-size-btn {
    font-size: 16px;
    align-items: center;
}

.font-size-btn.small {
    font-size: 13px;
}

.font-size-btn svg {
    margin-top: -8px;
}

.t-b {
    font-family: "Liberation Sans", sans-serif;
    font-weight: 700;
    font-size: 14px;
}

.t-i {
    font-family: "Liberation Serif", serif;
    font-style: italic;
    font-size: 15px;
}

.t-u {
    font-size: 13px;
    text-decoration: underline;
}

.font-color {
    padding-left: 5px;
}

.fc-a {
    display: block;
    width: 16px;
    height: 18px;
    line-height: 14px;
    text-align: center;
    font-size: 14px;
    color: #ccc;
    border-bottom: 4px solid #f00000;
}

.t-pct {
    font-size: 19px;
    font-weight: 300;
}

.t-comma {
    font-size: 22px;
    font-weight: 700;
    padding-bottom: 8px;
}

.al { width: 14px; height: 14px; color: #ccc; }
.al2 { width: 14px; height: 16px; color: #ccc; }

.align-left {
    width: 146px;
    padding-left: 11px;
    display: flex;
    height: 67px;
    border-right: 1px solid #565656;
    margin-top: 6px;
    padding-top: 1px;
}

.align-right {
    display: flex;
    padding-left: 10px;
}

.row-icon {
    margin-right: 3px;
}

.merge-chev {
    margin-left: 18px;
}

.svg-small {
    font-family: "Liberation Sans", sans-serif;
    font-size: 9px;
    fill: #ccc;
}

.svg-big {
    font-family: "Liberation Sans", sans-serif;
    font-size: 17px;
    fill: #c8c8c8;
}

.svg-big.blue {
    fill: #3a96dd;
}

.ribbon-more {
    margin-left: auto;
    margin-right: 10px;
    margin-top: 79px;
    width: 12px;
    height: 8px;
}

/* formula bar */
.formula {
    height: 26px;
    margin: 8px 8px 7px;
    flex: none;
    display: flex;
    align-items: stretch;
}

.name-box, .fx-box, .formula-input {
    background: #292929;
    border: 1px solid #5a5a5a;
    border-radius: 4px;
    display: flex;
    align-items: center;
}

.name-box {
    width: 101px;
    padding: 0 6px;
    justify-content: space-between;
    font-size: 14px;
}

.formula-dots {
    width: 21px;
    text-align: center;
    line-height: 26px;
    font-size: 14px;
    font-weight: 700;
}

.fx-box {
    width: 86px;
    padding: 0 3px 0 6px;
    gap: 4px;
}

.fx-box .chev {
    width: 8px;
}

.fx {
    font-family: "Liberation Serif", serif;
    font-size: 17px;
    font-weight: 700;
    color: #bbb;
    width: 18px;
    text-align: center;
    margin-left: 5px;
}

.formula-input {
    flex: 1;
    margin-left: 5px;
    padding: 0 4px 0 9px;
    font-feature-settings: normal;
    font-size: 14.67px;
    letter-spacing: .5px;
    color: #e8e8e8;
    white-space: pre;
}

.formula-input .chev {
    margin-left: auto;
    width: 11px;
    height: 7px;
}

/* sheet */
.sheet-area {
    height: 776px;
    flex: none;
    display: flex;
}

.grid-view {
    width: 1898px;
    height: 776px;
    overflow: hidden;
    background: #0a0a0a;
}

.grid {
    table-layout: fixed;
    width: 1901px;
    border-collapse: separate;
    border-spacing: 0;
    font-family: "Liberation Sans", "Noto Sans CJK JP", sans-serif;
    font-feature-settings: normal;
    font-size: 14.6px;
    color: #1a1a1a;
    background: #fff;
}

.grid th {
    height: 19px;
    padding: 0;
    font-weight: 400;
    background: #0a0a0a;
    color: #d4d4d4;
    overflow: hidden;
    text-align: center;
    line-height: 18px;
    font-size: 14.67px;
}

.grid thead th {
    border-right: 1px solid #3c3c3c;
    border-bottom: 1px solid #666;
}

.grid tbody th {
    border-bottom: 1px solid #333;
    border-right: 1px solid #666;
}

.grid th.corner {
    padding: 4px 3px 2px 13px;
}

.grid th.col-row {
    width: 29px;
}

.grid th.on {
    background: #6b6b6b;
    color: #fff;
}

.grid td {
    height: 19px;
    padding: 2px 2px 0;
    line-height: 16px;
    overflow: hidden;
    white-space: pre;
    vertical-align: bottom;
    border-right: 1px solid #dcdcdc;
    border-bottom: 1px solid #dcdcdc;
}

.grid td.num {
    text-align: right;
    padding-right: 3px;
}

.grid td.jp {
    letter-spacing: 1px;
}

.grid td.good {
    background: #dcfdd0;
    color: #006100;
    border-color: #c4e8b6;
}

.grid td.spill {
    overflow: visible;
}

.grid td.sel {
    background: #fff;
    color: #1a1a1a;
    position: relative;
    overflow: visible;
}

.sel-clip {
    display: block;
    overflow: hidden;
}

/* selection frame lies over the cell */
.sel-box {
    position: absolute;
    left: -3px;
    top: -2px;
    right: -1px;
    bottom: -1px;
    border: 2px solid #1e6b45;
    border-left-width: 3px;
    pointer-events: none;
}

.sel-handle {
    position: absolute;
    right: -3px;
    bottom: -3px;
    width: 6px;
    height: 6px;
    background: #1e6b45;
    border: 1px solid #fff;
}

.vscroll {
    width: 18px;
    margin-left: 2px;
    height: 779px;
    background: #161616;
    border-radius: 9px;
    display: flex;
    flex-direction: column;
    align-items: center;
    padding-top: 4px;
    position: relative;
    z-index: 1;
}

.vthumb {
    width: 9px;
    height: 17px;
    margin-top: 6px;
    background: #9a9a9a;
    border-radius: 4px;
}

.vdown {
    margin-top: auto;
    margin-bottom: 6px;
}

/* sheet tabs row */
.sheet-tabs {
    height: 32px;
    flex: none;
    background: #0d0d0d;
    display: flex;
    align-items: flex-start;
}

.nav-arrows {
    width: 116px;
    display: flex;
    gap: 26px;
    padding: 9px 0 0 28px;
}

.sheet-tab {
    width: 169px;
    height: 28px;
    background: #fff;
    border-radius: 0 0 6px 6px;
    color: #444;
    font-family: "Liberation Sans", sans-serif;
    font-size: 14.67px;
    letter-spacing: .4px;
    text-align: center;
    line-height: 29px;
    box-shadow: inset 0 -4px 0 #fff, inset 0 -6px 0 #1e7145;
}

.tab-sep {
    width: 1px;
    height: 20px;
    margin: 4px 0 0 3px;
    background: #555;
}

.add-sheet {
    margin: 9px 0 0 42px;
}

.tabs-dots {
    margin-left: 804px;
    margin-top: 6px;
    font-size: 13px;
    line-height: 18px;
    font-weight: 700;
    width: 8px;
}

.hleft {
    margin: 10px 0 0 19px;
}

.hscroll {
    margin: 7px 0 0 0;
    width: 722px;
    height: 16px;
    background: #161616;
    border-radius: 8px;
    display: flex;
    align-items: center;
    padding-left: 5px;
}

.hthumb {
    width: 668px;
    height: 9px;
    background: #9a9a9a;
    border-radius: 5px;
    margin-right: 32px;
}

/* status bar */
.status {
    height: 22px;
    flex: none;
    border-top: 1px solid #333;
    background: #141414;
    display: flex;
    align-items: center;
    padding-left: 12px;
    font-size: 12px;
}

.macro {
    margin-left: 21px;
}

.a11y {
    margin-left: 16px;
}

.a11y-text {
    margin-left: 3px;
    letter-spacing: -1.2px;
}

.status-right {
    margin-left: auto;
    display: flex;
    align-items: center;
    height: 100%;
}

.view {
    width: 39px;
    height: 100%;
    display: flex;
    align-items: center;
    justify-content: center;
    margin-right: 1px;
}

.view-on {
    background: #2a2a2a;
}

.zoom-minus {
    width: 8px;
    height: 1px;
    background: #ddd;
    margin-left: 5px;
}

.slider {
    width: 100px;
    height: 1px;
    margin-left: 5px;
    background: #aaa;
    display: flex;
    align-items: center;
    padding-left: 47px;
}

.slider-thumb {
    width: 5px;
    height: 11px;
    background: #a8a8a8;
}

.zoom-plus {
    margin-left: 5px;
}

.zoom-pct {
    margin-left: 13px;
    margin-right: 9px;
    width: 32px;
    text-align: right;
    white-space: nowrap;
    letter-spacing: .5px;
}
```

FILE: grid.js
```js
const COLS = 'ABCDEFGHIJKLMNOPQRSTUVWXYZ'.split('');
const MASS = ['1', '2', '3', '4', '14', '15', '16', '17', '18', '20', '22', '28', '32', '40', '44'];
const DASH = ['--', '--', '--', '--', '--'];

// one array per row, first item is column A. {t, span} merges empty neighbours for long text
const rows = [
    ['データファイル名    :', { t: 'C:\\ULVAC\\QuleeQCS4\\S1\\Komatsu\\241018_NbN19,5_Ru0.5_600d\\S1_241017_221354.qst', span: 9 }],
    [{ t: 'チャンバ名           :', spill: true }],
    [{ t: '装置名              :', spill: true }],
    ['センサー名称', 'HGM2-302'],
    ['センサー番号', '1'],
    ['レシピ番号', '2'],
    ['レシピ名称', { t: 'NH3_trend2_komatsu', span: 2 }],
    ['測定モード', { t: ' トレンドモード', span: 2 }],
    ['測定質量数', ...MASS, ...DASH],
    ['測定スピード', '500', 'msec'],
    ['移動平均回数', '1', '回'],
    ['測定間隔', '7500', 'msec'],
    ['保存間隔', '1', '回'],
    ['導入バルブ', '全閉'],
    ['終了バルブ', '状態維持'],
    ['イオン化電圧', '70', 'eV'],
    ['レンジ値', { t: 'オートレンジ', span: 2 }],
    ['データの種類', { t: 'イオン強度', span: 2 }],
    ['分圧の参照', { t: '感度校正値', span: 2 }],
    ['圧力単位', '[Pa]'],
    ['ｱﾅﾛｸﾞ CH.1', '圧力'],
    ['ｱﾅﾛｸﾞ CH.2', '圧力'],
    ['選択 FIL', 'FIL1'],
    ['選択 SEM', 'FC'],
    ['SEM 電圧', '-1.2', 'kV'],
    ['変換条件', '校正圧力値', '5.00E-04', '設定イオン', '4.81E-10'],
    ['変換条件', '換算係数値', '8'],
    ['圧力"変換', '最大温度', '1000', '最小温度', '0'],
    ['変換条件', '換算係数値', '8'],
    ['変換条件', '最大温度', '1000', '最小温度', '0'],
    ['測定開始日時', '########'],
    ['測定終了日時', '########'],
    ['エミッション', '500', 'µA'],
    ['SEMインタ', '無視状態', '有効', '1.00E-02'],
    ['Ar表示機能', '無効', '0'],
    [],
    [],
    ['', '', '', '', '', '', ...MASS, ...DASH],
    ['測定回数', '経過時間', '時刻', '分圧比率1', '分圧比率2', '全圧',
        ...Array.from({ length: 20 }, (_, i) => String(i + 1))],
    ['1', '000:00:00.', '2024/10/17', '1', '1', '1.00E-99',
        ...Array(15).fill('1.00E-14'), ...Array(5).fill('1.00E-99')]
];

const isNum = s => /^-?[\d.]+(E-\d+)?$/.test(s);
const isJp = s => /[\u3000-\u9fff]/.test(s);

function buildHead() {
    const thead = document.createElement('thead');
    const tr = document.createElement('tr');
    const corner = document.createElement('th');
    corner.className = 'col-row corner';
    corner.innerHTML = '<svg viewBox="0 0 12 11" width="12" height="11"><path d="M12 0v11H0z" fill="#6a6a6a"/></svg>';
    tr.appendChild(corner);
    COLS.forEach((c, i) => {
        const th = document.createElement('th');
        th.textContent = c;
        if (i === 0) th.className = 'on';
        tr.appendChild(th);
    });
    thead.appendChild(tr);
    return thead;
}

function buildCell(raw, r, col) {
    const cell = typeof raw === 'object' && raw ? raw : { t: raw || '' };
    const td = document.createElement('td');
    const classes = [];
    if (cell.span) td.colSpan = cell.span;
    if (col === 0 || r === 0) classes.push('good');
    if (isNum(cell.t)) classes.push('num');
    if (isJp(cell.t)) classes.push('jp');
    if (cell.spill) classes.push('spill');
    if (r === 0 && col === 0) {
        classes.push('sel');
        td.innerHTML = '<span class="sel-clip"></span><span class="sel-box"><span class="sel-handle"></span></span>';
        td.firstChild.textContent = cell.t;
    } else {
        td.textContent = cell.t;
    }
    td.className = classes.join(' ');
    return td;
}

function buildRow(data, r) {
    const tr = document.createElement('tr');
    const head = document.createElement('th');
    head.textContent = r + 1;
    if (r === 0) head.className = 'on';
    tr.appendChild(head);

    let col = 0;
    let i = 0;
    while (col < COLS.length) {
        const raw = data[i++];
        tr.appendChild(buildCell(raw, r, col));
        col += (raw && raw.span) || 1;
    }
    return tr;
}

const table = document.getElementById('grid');
const colgroup = document.createElement('colgroup');
colgroup.innerHTML = '<col style="width:29px">' + COLS.map(() => '<col style="width:72px">').join('');
table.appendChild(colgroup);
table.appendChild(buildHead());
const tbody = document.createElement('tbody');
rows.forEach((data, r) => tbody.appendChild(buildRow(data, r)));
table.appendChild(tbody);

// small tops of the taskbar icons at the bottom edge of the screen
const taskColors = ['#ddd', '#ddd', '#c9a', '#45c', '#a85', '#412', '#c43', '#c43', '#a85', '#2ab', '#a85', '#a85', '#3b5', '#a85', '#e9b', '#111', '#eee', '#111', '#a85', '#a85', '#69c', '#bbb', '#a85', '#126', '#532', '#69c', '#a85', '#2ba', '#ebd', '#eee', '#3b3', '#48d', '#48d', '#3b8', '#c77', '#c33', '#a85', '#a85', '#a85', '#a85', '#532', '#eee'];
const taskbar = document.getElementById('taskbar');
taskColors.forEach(color => {
    const dot = document.createElement('i');
    dot.style.background = color;
    taskbar.appendChild(dot);
});
```
